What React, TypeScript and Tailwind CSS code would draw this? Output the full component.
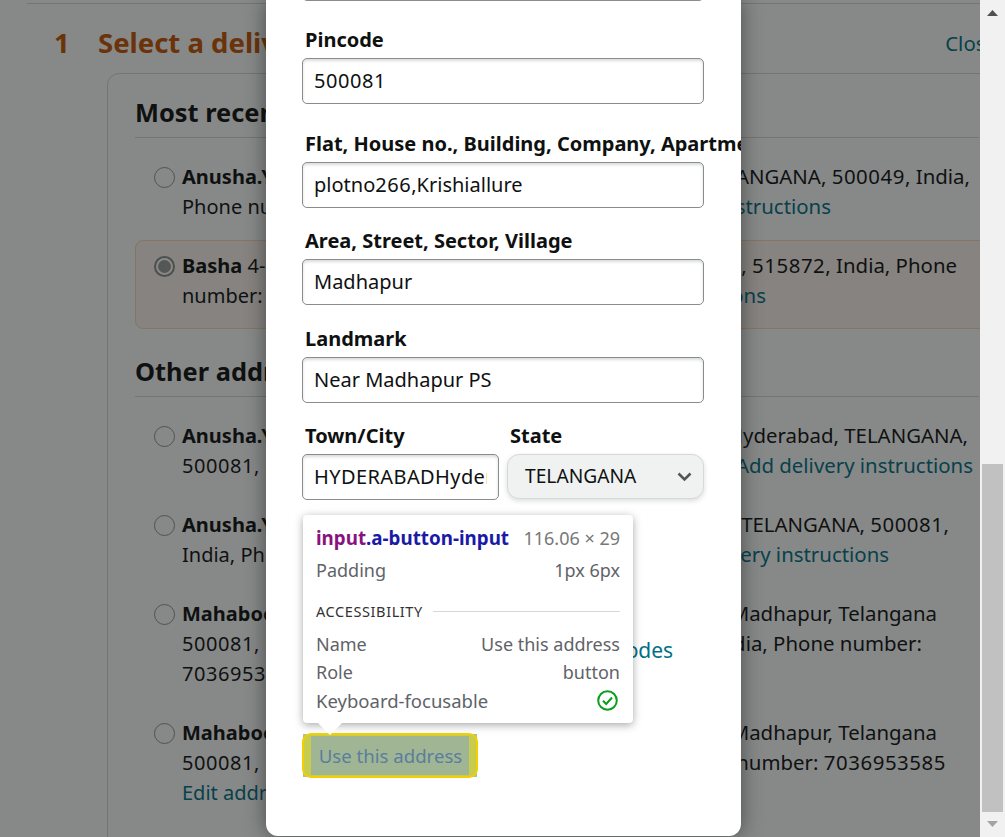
import React from "react";

function T({ s }: { s: string }) {
  return (
    <>
      {s.split(/(\d+)/).map((p, i) =>
        /^\d+$/.test(p) ? <span key={i} className="tracking-[0.56px]">{p}</span> : <React.Fragment key={i}>{p}</React.Fragment>
      )}
    </>
  );
}

function Line({ left, right, cls, rightLink }: { left: React.ReactNode; right?: string; cls?: string; rightLink?: boolean }) {
  return (
    <div className="flex h-[30px] items-center justify-between whitespace-nowrap">
      <span>{typeof left === "string" ? <T s={left} /> : left}</span>
      {right && <span className={`-mt-[2px] text-[20.4px] ${cls ?? ""} ${rightLink ? "text-[#007185]" : ""}`}><T s={right} /></span>}
    </div>
  );
}

function Radio({ checked }: { checked?: boolean }) {
  return (
    <span className={`mt-[5px] flex h-[21px] w-[21px] shrink-0 items-center justify-center rounded-full bg-white ${checked ? "border-2 border-[#8a8a8a]" : "border border-[#919191]"}`}>
      {checked && <span className="h-[13px] w-[13px] rounded-full bg-[#9a9a9a]" />}
    </span>
  );
}

function Address({ children, checked, cls }: { children: React.ReactNode; checked?: boolean; cls: string }) {
  return (
    <div className={`flex gap-[7px] pl-[19px] ${cls}`}>
      <Radio checked={checked} />
      <div className="flex-1">{children}</div>
    </div>
  );
}

function Label({ text }: { text: string }) {
  return <div className="h-[26px] whitespace-nowrap pl-[3px] text-[20px] font-bold leading-[26px] text-[#0f1111]">{text}</div>;
}

function Field({ label, value, cls }: { label: string; value: string; cls: string }) {
  return (
    <div className={cls}>
      <Label text={label} />
      <Input value={value} />
    </div>
  );
}

function Input({ value, cls }: { value: string; cls?: string }) {
  return (
    <div className="mt-[5px] h-[46px] rounded-[5px] border border-[#888c8c] bg-white pl-[11px] pr-[11px] shadow-[inset_0_2px_3px_rgba(15,17,17,0.15)]">
      <div className={`overflow-hidden whitespace-nowrap text-[20px] leading-[44px] text-[#0f1111] ${cls ?? ""}`}><T s={value} /></div>
    </div>
  );
}

function Row({ a, b }: { a: React.ReactNode; b: React.ReactNode }) {
  return (
    <div className="flex h-[28.5px] items-center justify-between">
      <span>{a}</span>
      <span>{b}</span>
    </div>
  );
}

export default function App() {
  return (
    <div className="relative flex h-[837px] w-[1005px] overflow-hidden bg-white font-['Noto_Sans',sans-serif] text-[20px] text-[#0f1111]">
      <main className="relative w-[980px] overflow-hidden">
        <div className="ml-[27px] h-[4px] border-b border-[#d5d9d9]" />
        <div className="flex h-[69px] items-center pl-[54px] pt-[9px]">
          <span className="w-[44px] text-[27.5px] font-bold leading-none text-[#c45500]">1</span>
          <span className="text-[27.5px] font-bold leading-none text-[#c45500]">Select a delivery address</span>
          <span className="ml-auto mr-[-17px] text-[20.4px] text-[#007185]">Close</span>
        </div>
        <div className="ml-[107px] mr-[-30px] h-[900px] rounded-tl-[12px] border border-[#d5d9d9] pl-[27px] pr-[30px] pt-[17px]">
          <h2 className="h-[47px] border-b border-[#d5d9d9] text-[25.4px] font-bold leading-[43px]">Most recently used</h2>
          <Address cls="mt-[24px] pr-[9px]">
            <Line left={<b>Anusha.Y</b>} right="TELANGANA, 500049, India," />
            <Line left="Phone number" right="Add delivery instructions" rightLink cls="mr-[139px]" />
          </Address>
          <div className="-mr-[20px] mt-[18px] h-[89px] rounded-[8px] border border-[#fbd8b4] bg-[#fcf5ee] pl-[18px] pr-[23px] pt-[10px]">
            <div className="flex gap-[7px]">
              <Radio checked />
              <div className="flex-1">
                <Line left={<><b>Basha</b> 4-</>} right=", 515872, India, Phone" cls="mr-[18px]" />
                <Line left="number:" right="instructions" rightLink cls="mr-[209px]" />
              </div>
            </div>
          </div>
          <h2 className="mt-[21px] h-[47px] border-b border-[#d5d9d9] text-[25.4px] font-bold leading-[43px]">Other addresses</h2>
          <Address cls="mt-[24px] pr-[11px]">
            <Line left={<b>Anusha.Y</b>} right="Hyderabad, TELANGANA," />
            <Line left="500081," right="Add delivery instructions" rightLink cls="-mr-[5px]" />
          </Address>
          <Address cls="mt-[29px] pr-[30px]">
            <Line left={<b>Anusha.Y</b>} right="TELANGANA, 500081," />
            <Line left="India, Ph" right="delivery instructions" rightLink cls="mr-[60px]" />
          </Address>
          <Address cls="mt-[29px] pr-[42px]">
            <Line left={<b>Mahaboob</b>} right="Madhapur, Telangana" />
            <Line left="500081," right="India, Phone number:" cls="mr-[15px]" />
            <Line left="7036953585" />
          </Address>
          <Address cls="mt-[29px] pr-[33px]">
            <Line left={<b>Mahaboob</b>} right="Madhapur, Telangana" cls="mr-[9px]" />
            <Line left="500081," right="number: 7036953585" />
            <Line left={<span className="text-[#007185]">Edit address</span>} />
          </Address>
        </div>
        <div className="absolute inset-0 bg-[#0f1111]/50" />
      </main>

      {/* scrollbar */}
      <div className="relative w-[25px] bg-[#f1f1f1]">
        <svg className="absolute left-[7px] top-[10px]" width="11" height="6" viewBox="0 0 11 6"><path d="M5.5 0 11 6H0z" fill="#505050" /></svg>
        <div className="absolute left-[2px] top-[464px] h-[348px] w-[21px] bg-[#c1c1c1]" />
        <svg className="absolute left-[7px] top-[821px]" width="11" height="6" viewBox="0 0 11 6"><path d="M0 0h11L5.5 6z" fill="#a3a3a3" /></svg>
      </div>

      {/* modal */}
      <div className="absolute bottom-[1px] left-[266px] top-0 w-[475px] overflow-hidden rounded-b-[12px] bg-white pl-[36px] pr-[37px] shadow-[0_0_20px_rgba(15,17,17,0.5)]">
        <div className="-mt-[45px] h-[46px] rounded-[5px] border border-[#888c8c]" />
        <Field cls="mt-[26px]" label="Pincode" value="500081" />
        <Field cls="mt-[27px]" label="Flat, House no., Building, Company, Apartment" value="plotno266,Krishiallure" />
        <Field cls="mt-[20px]" label="Area, Street, Sector, Village" value="Madhapur" />
        <Field cls="mt-[21px]" label="Landmark" value="Near Madhapur PS" />
        <div className="mt-[20px] flex gap-[8px]">
          <div className="w-[197px]">
            <Label text="Town/City" />
            <Input value="HYDERABADHyderabad" cls="tracking-[0.4px]" />
          </div>
          <div className="w-[197px]">
            <Label text="State" />
            <div className="mt-[5px] flex h-[45px] items-center justify-between rounded-[12px] border border-[#d5d9d9] bg-[#f0f2f2] pl-[17px] pr-[11px] text-[19.2px] shadow-[0_2px_5px_rgba(15,17,17,0.15)]">
              TELANGANA
              <svg width="15" height="10" viewBox="0 0 15 10" fill="none"><path d="M1.5 1.5 7.5 7.5 13.5 1.5" stroke="#555" strokeWidth="2.6" /></svg>
            </div>
          </div>
        </div>
        <div className="mt-[135px] whitespace-nowrap pl-[5px] text-[21px] leading-[30px] text-[#007185]">Add preferences, notes, access codes</div>
        <div className="relative ml-0 mt-[68px] h-[45px] w-[176px]">
          <div className="absolute inset-y-[1px] inset-x-[1px] bg-[#a3c49c]" />
          <div className="absolute inset-0 rounded-[9px] border-2 border-[#f2d000] bg-[#c7cc4e]" />
          <div className="absolute bottom-[3px] left-[9px] right-[9px] top-[3px] flex items-center justify-center bg-[#9fb593] pl-[1px] text-[18.6px] text-[#5b7d9e]">Use this address</div>
        </div>

        {/* DevTools tooltip */}
        <div className="absolute left-[37px] top-[515px] h-[208px] w-[330px] rounded-[4px] bg-white px-[13px] pt-[8px] text-[18px] leading-[28.5px] text-[#5f6368] shadow-[0_2px_8px_rgba(0,0,0,0.35)]">
          <div className="flex h-[30px] items-center justify-between">
            <span className="text-[18.8px] font-bold"><span className="text-[#881280]">input</span><span className="text-[#1a1aa6]">.a-button-input</span></span>
            <span className="text-[#777]">116.06 × 29</span>
          </div>
          <div className="mt-[3px]"><Row a="Padding" b="1px 6px" /></div>
          <div className="mt-[17px] flex h-[20px] items-center gap-[10px]">
            <span className="text-[14.5px] tracking-[0.6px] text-[#333]">ACCESSIBILITY</span>
            <span className="h-px flex-1 bg-[#d8d8d8]" />
          </div>
          <div className="mt-[8px]">
            <Row a="Name" b="Use this address" />
            <Row a="Role" b="button" />
            <Row a={<span className="text-[18.5px]">Keyboard-focusable</span>} b={
              <svg className="mr-[2px] block" width="21" height="21" viewBox="0 0 21 21" fill="none"><circle cx="10.5" cy="10.5" r="9.3" stroke="#0a9e1e" strokeWidth="2" /><path d="M6 10.8 9.2 14 15 7.5" stroke="#0a9e1e" strokeWidth="2" /></svg>
            } />
          </div>
          <svg className="absolute left-[15px] top-[208px]" width="24" height="12" viewBox="0 0 24 12"><path d="M0 0h24L12 12z" fill="#fff" /></svg>
        </div>
      </div>
    </div>
  );
}
